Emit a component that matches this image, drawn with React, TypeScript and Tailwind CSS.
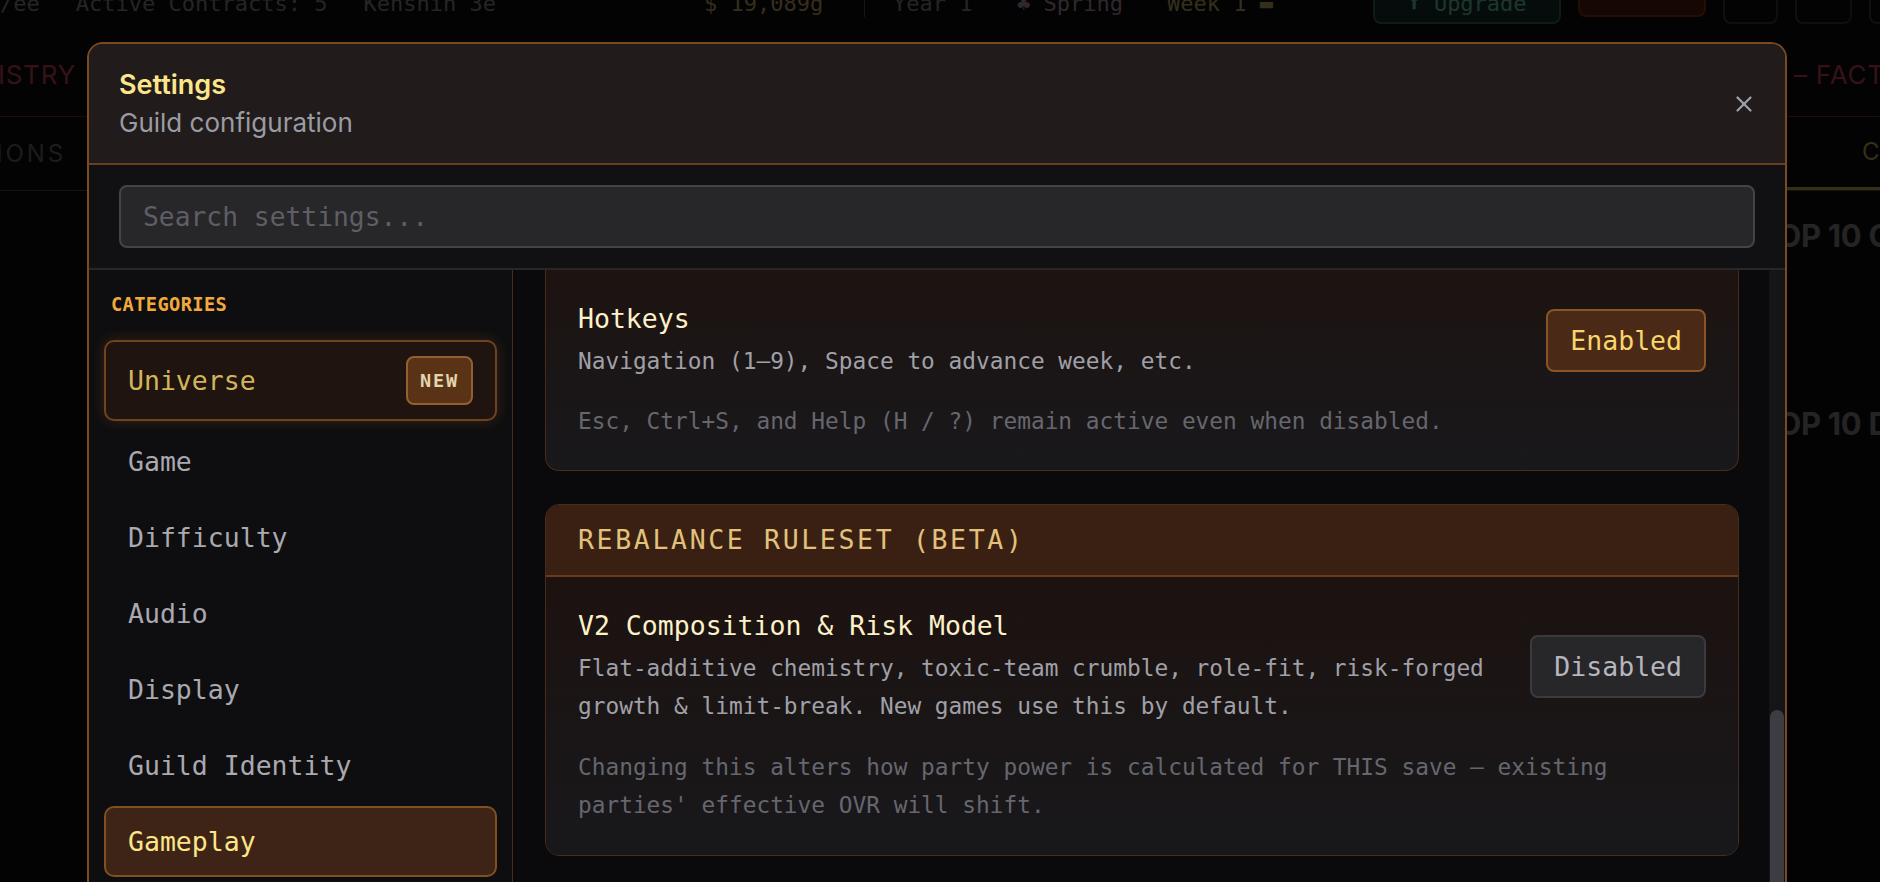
import React, { useLayoutEffect, useRef } from "react";

const MONO = "font-['DejaVu_Sans_Mono','Liberation_Mono',monospace]";

function CloseIcon() {
  return (
    <svg width="22" height="22" viewBox="0 0 22 22" fill="none" stroke="#a1a1aa" strokeWidth="2.2" strokeLinecap="round">
      <path d="M4.5 4.5 L17.5 17.5" />
      <path d="M17.5 4.5 L4.5 17.5" />
    </svg>
  );
}

function SidebarItem({ label, variant }: { label: string; variant?: "universe" | "active" }) {
  if (variant === "universe") {
    return (
      <div className="flex items-center justify-between rounded-[10px] border-2 border-[#6f4220] bg-[#1f1410] py-[14px] pl-[22px] pr-[22px] shadow-[0_0_14px_rgba(170,95,35,0.28)]">
        <span className="text-[26.5px] leading-[49px] text-[#d3b45c]">{label}</span>
        <span className="rounded-[8px] border-2 border-[#93602f] bg-[#5a3317] px-[12px] text-[18.5px] font-bold leading-[45px] tracking-[0.1em] text-[#e3d4b0]">
          NEW
        </span>
      </div>
    );
  }
  if (variant === "active") {
    return (
      <div className="rounded-[10px] border-2 border-[#80501f] bg-[#3e2416] py-[15px] pl-[22px] pr-[22px]">
        <span className="text-[26.5px] leading-[37px] text-[#fde68a]">{label}</span>
      </div>
    );
  }
  return (
    <div className="rounded-[10px] border-2 border-transparent py-[15px] pl-[22px] pr-[22px]">
      <span className="text-[26.5px] leading-[37px] text-[#a9a9b1]">{label}</span>
    </div>
  );
}

function ToggleButton({ on }: { on: boolean }) {
  if (on) {
    return (
      <button className="shrink-0 rounded-[8px] border-2 border-[#8a5526] bg-[#4a2a17] px-[22px] py-[11px] text-[26.5px] leading-[37px] text-[#f8d66b]">
        Enabled
      </button>
    );
  }
  return (
    <button className="shrink-0 rounded-[8px] border-2 border-[#3a3a40] bg-[#27272a] px-[22px] py-[11px] text-[26.5px] leading-[37px] text-[#b6b6be]">
      Disabled
    </button>
  );
}

function SettingRow({
  title,
  desc,
  note,
  on,
}: {
  title: string;
  desc: string;
  note: string;
  on: boolean;
}) {
  return (
    <div>
      <div className="flex items-center justify-between gap-[40px]">
        <div className="min-w-0 flex-1">
          <div className="text-[26.5px] leading-[37px] text-[#fdf1c9]">{title}</div>
          <div className="mt-[5px] text-[22.8px] leading-[38.4px] text-[#a0a0a8]">{desc}</div>
        </div>
        <ToggleButton on={on} />
      </div>
      <div className="mt-[22px] text-[22.8px] leading-[38.4px] text-[#66666e]">{note}</div>
    </div>
  );
}

export default function App() {
  const pageRef = useRef<HTMLDivElement>(null);
  useLayoutEffect(() => {
    if (pageRef.current) pageRef.current.scrollTop = 36;
  }, []);

  return (
    <div className="relative h-screen w-full overflow-hidden bg-black font-['Inter','Noto_Sans',sans-serif]">
      {/* Background page */}
      <div ref={pageRef} className="h-screen overflow-hidden bg-[#0c0b0b]">
        <div className="h-[1400px]">
          {/* top bar */}
          <div className={`flex h-[78px] items-center whitespace-nowrap text-[22px] text-[#7c7c7c] ${MONO}`}>
            <div className="flex w-[704px] shrink-0 items-center gap-[36px]">
              <span>/ee</span>
              <span>Active Contracts: 5</span>
              <span>Kenshin 3e</span>
            </div>
            <span className="w-[160px] shrink-0 text-[#b39c60]">$ 19,089g</span>
            <span className="h-[28px] w-px shrink-0 bg-[#4a4a4a]" />
            <span className="ml-[28px] w-[124px] shrink-0">Year 1</span>
            <span className="w-[150px] shrink-0 text-[#a0849a]">♣ Spring</span>
            <span className="w-[206px] shrink-0 text-[#b39c60]">Week 1 ▬</span>
            <div className="flex h-[42px] w-[188px] shrink-0 items-center justify-center rounded-[8px] border-2 border-[#2f5f48] bg-[#152b26] text-[#5fb88f]">
              ⬆ Upgrade
            </div>
            <div className="mb-[10px] ml-[17px] h-[38px] w-[128px] shrink-0 rounded-[8px] border-2 border-[#7a2c18] bg-[#4e180e]" />
            <div className="ml-[17px] h-[42px] w-[55px] shrink-0 rounded-[8px] border-2 border-[#333]" />
            <div className="ml-[17px] h-[42px] w-[57px] shrink-0 rounded-[8px] border-2 border-[#333]" />
            <div className="ml-[17px] h-[42px] w-[40px] shrink-0 rounded-[8px] border-2 border-[#333]" />
          </div>
          {/* nav row */}
          <div className="flex h-[75px] items-center justify-between border-b border-[#6e1f2b] pb-[10px] text-[26px] uppercase tracking-[0.03em] text-[#b63f51]">
            <div className="flex w-[76px] justify-end overflow-hidden whitespace-nowrap">REGISTRY</div>
            <div className="w-[94px] overflow-hidden whitespace-nowrap pl-[8px]">– FACTIONS</div>
          </div>
          {/* tab row */}
          <div className="flex h-[74px] items-stretch justify-between border-b border-[#404040] text-[24px] uppercase tracking-[0.12em]">
            <div className="flex w-[66px] items-center justify-end overflow-hidden whitespace-nowrap text-[#5e5e62]">ACTIONS</div>
            <div className="flex w-[100px] items-center overflow-hidden whitespace-nowrap border-b-[3px] border-[#b99e40] pl-[82px] text-[#b39f48]">CONTRACTS</div>
          </div>
          {/* content */}
          <div className="flex justify-end">
            <div className="flex w-[108px] flex-col gap-[141px] overflow-hidden whitespace-nowrap pt-[22px] text-[31px] font-bold tracking-[-0.01em] text-[#78787e]">
              <div className="-ml-[14px]">TOP 10 CONTRACTS</div>
              <div className="-ml-[14px]">TOP 10 DUNGEONS</div>
            </div>
          </div>
        </div>
      </div>

      {/* Backdrop */}
      <div className="fixed inset-0 bg-black/70" />

      {/* Modal */}
      <div className="fixed inset-0 flex items-start pl-[87px] pt-[42px]">
        <div className={`flex h-[900px] w-[1700px] flex-col overflow-hidden rounded-[16px] border-2 border-[#7a4a22] bg-[#0e0e10] ${MONO}`}>
          {/* Header */}
          <div className="flex items-center justify-between border-b-2 border-[#6b3e1c] bg-[#211c1b] px-[30px] pb-[22px] pt-[22px] font-['Inter','Noto_Sans',sans-serif]">
            <div>
              <div className="text-[27px] font-semibold leading-[38px] text-[#fde68a]">Settings</div>
              <div className="mt-[1px] text-[26px] leading-[36px] text-[#9b9ba3]">Guild configuration</div>
            </div>
            <button className="flex h-[22px] w-[22px] items-center justify-center">
              <CloseIcon />
            </button>
          </div>

          {/* Search */}
          <div className="border-b-2 border-[#27272a] bg-[#111113] px-[30px] py-[20px]">
            <input
              readOnly
              placeholder="Search settings..."
              className={`h-[63px] w-full rounded-[8px] border-2 border-[#43434b] bg-[#27272a] px-[22px] text-[26.3px] text-[#d4d4d8] outline-none placeholder:text-[#5e5e66] ${MONO}`}
            />
          </div>

          {/* Body */}
          <div className="flex min-h-0 flex-1">
            {/* Sidebar */}
            <div className="w-[424px] shrink-0 border-r border-[#4a2c18] bg-[#0e0e10] px-[15px] pt-[22px]">
              <div className="pl-[7px] text-[18.7px] font-bold leading-[26px] tracking-[0.02em] text-[#f2a93b]">CATEGORIES</div>
              <div className="mt-[22px] flex flex-col gap-[5px]">
                <SidebarItem label="Universe" variant="universe" />
                <SidebarItem label="Game" />
                <SidebarItem label="Difficulty" />
                <SidebarItem label="Audio" />
                <SidebarItem label="Display" />
                <SidebarItem label="Guild Identity" />
                <SidebarItem label="Gameplay" variant="active" />
              </div>
            </div>

            {/* Content */}
            <div className="flex min-w-0 flex-1 flex-col gap-[33px] overflow-hidden bg-[#0a0a0c] pl-[32px] pr-[30px]">
              <div className="rounded-b-[14px] border border-t-0 border-[#4a2c1a] bg-gradient-to-b from-[#1d1311] to-[#18181b] px-[32px] pb-[29px] pt-[30px]">
                <SettingRow
                  title="Hotkeys"
                  desc="Navigation (1–9), Space to advance week, etc."
                  note="Esc, Ctrl+S, and Help (H / ?) remain active even when disabled."
                  on
                />
              </div>

              <div className="overflow-hidden rounded-[14px] border border-[#4a2c1a]">
                <div className="flex h-[72px] items-center border-b-2 border-[#6e3a1c] bg-[#3a2013] px-[32px]">
                  <span className="text-[26.5px] uppercase tracking-[0.1em] text-[#e2c27a]">Rebalance Ruleset (Beta)</span>
                </div>
                <div className="bg-gradient-to-b from-[#1c1210] to-[#18181b] px-[32px] pb-[31px] pt-[30px]">
                  <SettingRow
                    title="V2 Composition & Risk Model"
                    desc="Flat-additive chemistry, toxic-team crumble, role-fit, risk-forged growth & limit-break. New games use this by default."
                    note="Changing this alters how party power is calculated for THIS save — existing parties' effective OVR will shift."
                    on={false}
                  />
                </div>
              </div>
            </div>

            {/* Scrollbar */}
            <div className="flex w-[16px] shrink-0 flex-col bg-[#151517]">
              <div className="mx-[1px] mt-[440px] h-[400px] rounded-full bg-[#3c3c42]" />
            </div>
          </div>
        </div>
      </div>
    </div>
  );
}
